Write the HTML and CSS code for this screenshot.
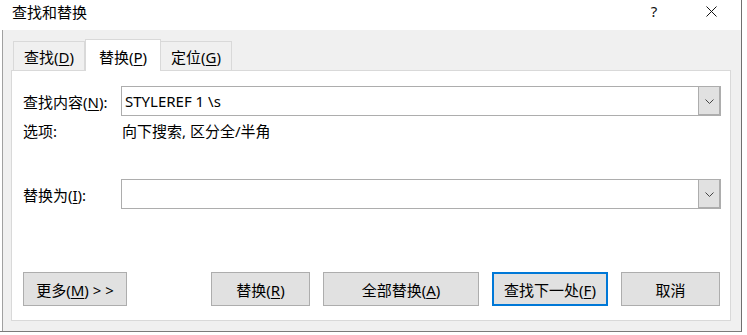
FILE: index.html
```html
<!DOCTYPE html>
<html lang="zh-CN">
<head>
  <meta charset="UTF-8">
  <title>查找和替换</title>
  <link rel="stylesheet" href="styles.css">
</head>
<body>

  <div class="dialog">

    <!-- Title bar -->
    <div class="titlebar">
      <span class="title">查找和替换</span>
      <div class="title-actions">
        <span class="help-btn">?</span>
        <span class="close-btn">
          <svg width="11" height="11" viewBox="0 0 11 11">
            <path d="M0.5 0.5 L10.5 10.5 M10.5 0.5 L0.5 10.5" stroke="#111" stroke-width="1" fill="none"/>
          </svg>
        </span>
      </div>
    </div>

    <div class="dialog-body">

      <!-- Tabs -->
      <div class="tabs">
        <div class="tab">查找(<u>D</u>)</div>
        <div class="tab active">替换(<u>P</u>)</div>
        <div class="tab">定位(<u>G</u>)</div>
      </div>

      <!-- Replace panel -->
      <div class="panel">
        <div class="field-row">
          <label class="field-label">查找内容(<u>N</u>):</label>
          <div class="combo">
            <span class="combo-text">STYLEREF 1 \s</span>
            <span class="combo-btn">
              <svg width="9" height="5" viewBox="0 0 9 5"><polyline points="0.5,0.5 4.5,4.5 8.5,0.5" fill="none" stroke="#444" stroke-width="1"/></svg>
            </span>
          </div>
        </div>

        <div class="options-row">
          <span class="field-label">选项:</span>
          <span class="options-value">向下搜索, 区分全/半角</span>
        </div>

        <div class="field-row replace-row">
          <label class="field-label">替换为(<u>I</u>):</label>
          <div class="combo">
            <span class="combo-text"></span>
            <span class="combo-btn">
              <svg width="9" height="5" viewBox="0 0 9 5"><polyline points="0.5,0.5 4.5,4.5 8.5,0.5" fill="none" stroke="#444" stroke-width="1"/></svg>
            </span>
          </div>
        </div>

        <div class="buttons">
          <button class="btn btn-more">更多(<u>M</u>) &gt; &gt;</button>
          <button class="btn">替换(<u>R</u>)</button>
          <button class="btn btn-wide">全部替换(<u>A</u>)</button>
          <button class="btn btn-next btn-default">查找下一处(<u>F</u>)</button>
          <button class="btn">取消</button>
        </div>
      </div>

    </div>
  </div>

</body>
</html>
```

FILE: styles.css
```css
body {
  margin: 0;
  width: 747px;
  height: 335px;
  overflow: hidden;
  background-color: #ffffff;
  font-family: "Noto Sans", "Noto Sans CJK SC", sans-serif;
  font-size: 15px;
  color: #000000;
}

u {
  text-decoration-thickness: 1px;
  text-underline-offset: 2px;
}

.dialog {
  width: 741px;
  height: 331px;
  border-right: 1px solid #6f6f6f;
  border-bottom: 1px solid #7a7a7a;
  display: flex;
  flex-direction: column;
}

/* Title bar */
.titlebar {
  height: 30px;
  flex-shrink: 0;
  background-color: #ffffff;
  display: flex;
  align-items: flex-start;
  padding-left: 12px;
}

.title {
  line-height: 24px;
}

.title-actions {
  margin-left: auto;
  display: flex;
}

.help-btn {
  width: 54px;
  text-align: center;
  line-height: 22px;
  color: #111;
}

.close-btn {
  width: 60px;
  height: 22px;
  display: flex;
  align-items: center;
  justify-content: center;
}

/* Body */
.dialog-body {
  flex: 1;
  display: flex;
  flex-direction: column;
  margin-left: 2px;
  border-left: 1px solid #a0a0a0;
  background-color: #f0f0f0;
  padding: 9px 10px 10px 8px;
}

.tabs {
  height: 31px;
  display: flex;
  align-items: flex-end;
  padding-left: 2px;
  position: relative;
  z-index: 1;
}

.tab {
  box-sizing: border-box;
  height: 29px;
  padding: 3px 10px 0;
  line-height: 24px;
  border: 1px solid #d9d9d9;
  border-bottom: none;
  background-color: #f0f0f0;
}

.tab.active {
  height: 32px;
  margin-bottom: -1px;
  padding: 5px 13px 0;
  background-color: #ffffff;
  position: relative;
  z-index: 2;
}

.tab.active + .tab {
  margin-left: -1px;
}

.panel {
  flex: 1;
  display: flex;
  flex-direction: column;
  border: 1px solid #d9d9d9;
  background-color: #ffffff;
  padding: 15px 9px 14px 11px;
}

.field-row {
  display: flex;
  align-items: center;
  height: 30px;
}

.field-label {
  width: 98px;
  flex-shrink: 0;
}

.combo {
  flex: 1;
  box-sizing: border-box;
  height: 30px;
  display: flex;
  border: 1px solid #adadad;
  background-color: #ffffff;
}

.combo-text {
  flex: 1;
  padding-left: 3px;
  line-height: 28px;
}

.combo-btn {
  width: 21px;
  display: flex;
  align-items: center;
  justify-content: center;
  background-color: #e1e1e1;
  border-left: 1px solid #adadad;
  box-shadow: inset -1px -1px 0 #adadad;
}

.options-row {
  display: flex;
  margin-top: 5px;
  line-height: 20px;
}

.options-value {
  padding-left: 1px;
}

.replace-row {
  margin-top: 38px;
}

.buttons {
  margin-top: auto;
  display: flex;
  gap: 13px;
  padding-right: 1px;
}

.btn {
  box-sizing: border-box;
  width: 99px;
  height: 34px;
  padding: 0;
  border: 1px solid #adadad;
  background-color: #e1e1e1;
  font-family: inherit;
  font-size: 15px;
  color: #000;
}

.btn-more {
  width: 104px;
  margin-right: auto;
}

.btn-wide {
  width: 156px;
}

.btn-next {
  width: 116px;
}

.btn-default {
  border: 2px solid #0078d7;
}
```
